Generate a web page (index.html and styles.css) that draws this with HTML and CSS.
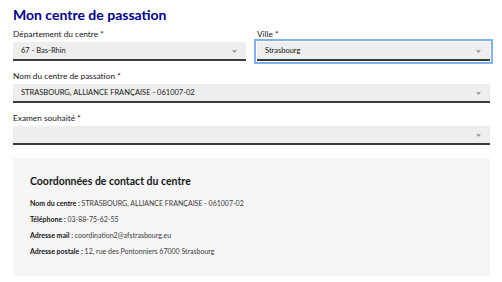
FILE: index.html
```html
<!DOCTYPE html>
<html>
<head>
    <title>Mon centre de passation</title>
    <link rel="stylesheet" href="styles.css">
</head>
<body>
    <div class="container">
        <h2>Mon centre de passation</h2>

        <div class="row">
            <div class="field">
                <label>Département du centre *</label>
                <div class="select"><span>67 - Bas-Rhin</span><i class="chev"></i></div>
            </div>
            <div class="field">
                <label>Ville *</label>
                <div class="select focus"><span>Strasbourg</span><i class="chev"></i></div>
            </div>
        </div>

        <div class="field">
            <label>Nom du centre de passation *</label>
            <div class="select"><span>STRASBOURG, ALLIANCE FRANÇAISE - 061007-02</span><i class="chev"></i></div>
        </div>

        <div class="field">
            <label>Examen souhaité *</label>
            <div class="select"><span></span><i class="chev"></i></div>
        </div>

        <div class="contact">
            <h3>Coordonnées de contact du centre</h3>
            <p><b>Nom du centre :</b> STRASBOURG, ALLIANCE FRANÇAISE - 061007-02</p>
            <p><b>Téléphone :</b> 03-88-75-62-55</p>
            <p><b>Adresse mail :</b> coordination2@afstrasbourg.eu</p>
            <p><b>Adresse postale :</b> 12, rue des Pontonniers 67000 Strasbourg</p>
        </div>
    </div>
</body>
</html>
```

FILE: styles.css
```css
body { margin: 0; font-family: "Lato", "Liberation Sans", sans-serif; color: #161616; background: #fff; }
.container { padding: 7px 12px 0 13px; }
h2 { margin: 0 0 6px; font-size: 14px; font-weight: 700; color: #000091; line-height: 16px; }
.row { display: flex; gap: 11px; }
.row .field { flex: 1; }
.field { margin-bottom: 10px; }
label { display: block; font-size: 8.3px; line-height: 10px; margin-bottom: 3px; }
.select {
    height: 17px;
    background: #eeeeee;
    border-bottom: 2px solid #3a3a3a;
    display: flex;
    align-items: center;
    justify-content: space-between;
    padding: 0 10px 0 8px;
    font-size: 7.5px;
}
.select.focus { outline: 2px solid #7eaff7; outline-offset: 1px; }
.chev {
    width: 2px; height: 2px;
    border-right: 1px solid #777;
    border-bottom: 1px solid #777;
    transform: rotate(45deg);
    margin-top: -1px;
}
.contact {
    background: #f6f6f6;
    margin-top: 13px;
    padding: 17px 17px 14px;
    height: 87px;
}
h3 { margin: 0 0 11px; font-size: 10.5px; font-weight: 700; line-height: 12px; }
.contact p { margin: 0 0 6px; font-size: 7px; line-height: 10px; color: #3a3a3a; }
.contact b { color: #161616; }
```
